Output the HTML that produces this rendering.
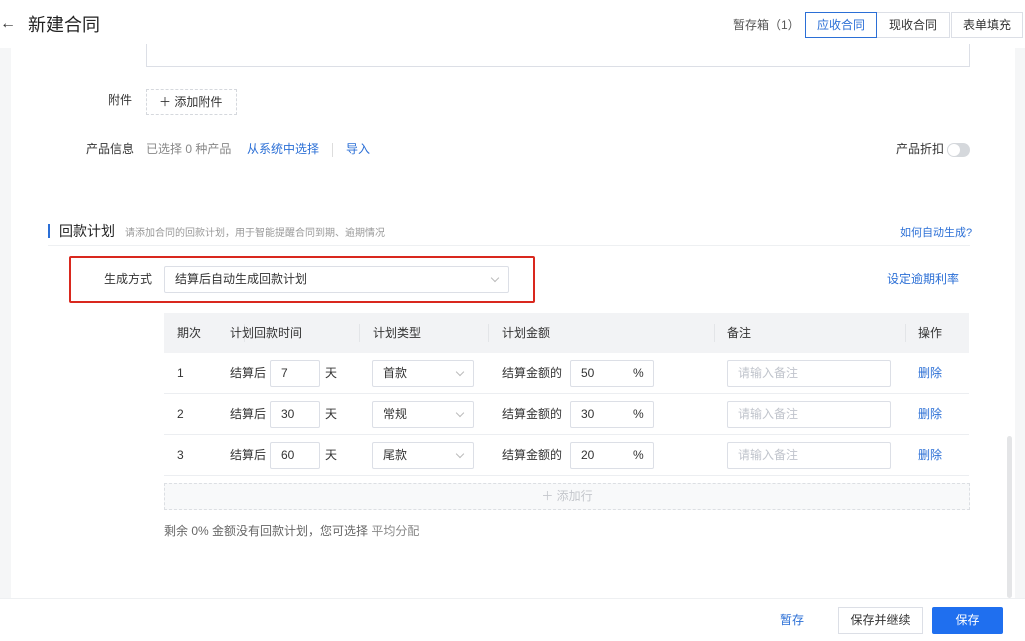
<!DOCTYPE html>
<html><head><meta charset="utf-8"><style>
*{box-sizing:border-box;margin:0;padding:0}
body{width:1025px;height:641px;overflow:hidden;background:#f5f6f7;font-family:"Liberation Sans","Noto Sans CJK SC",sans-serif;font-size:12px;color:#333;position:relative;line-height:16px}
.a{position:absolute;white-space:nowrap}
.blue{color:#2b6fd6}
.inp{position:absolute;height:27px;border:1px solid #dcdfe6;background:#fff;border-radius:2px;line-height:25px;padding-left:10px;font-size:12px}
.sel::after{content:"";position:absolute;right:10px;top:8px;width:5px;height:5px;border-right:1px solid #bbb;border-bottom:1px solid #bbb;transform:rotate(45deg)}
.th{position:absolute;top:313px;height:40px;line-height:40px;font-size:12px;color:#333}
.sep{position:absolute;top:324px;width:1px;height:18px;background:#e3e5e8}
.rl{position:absolute;left:164px;width:805px;height:1px;background:#eceef1}
</style></head><body>
<div class="a" style="left:0;top:0;width:1025px;height:48px;background:#fff"></div>
<div class="a" style="left:11px;top:48px;width:1004px;height:550px;background:#fff"></div>
<div class="a" style="left:0;top:16px;font-size:16px;color:#333">←</div>
<div class="a" style="left:28px;top:14px;font-size:18px;line-height:22px;color:#222">新建合同</div>
<div class="a" style="left:733px;top:17px;color:#555">暂存箱（1）</div>
<div class="a" style="left:805px;top:12px;width:72px;height:26px;border:1px solid #2b6fd6;color:#2b6fd6;text-align:center;line-height:24px">应收合同</div>
<div class="a" style="left:877px;top:12px;width:73px;height:26px;border:1px solid #dcdfe6;border-left:none;text-align:center;line-height:24px">现收合同</div>
<div class="a" style="left:951px;top:12px;width:72px;height:26px;border:1px solid #dcdfe6;text-align:center;line-height:24px">表单填充</div>

<div class="a" style="left:146px;top:44px;width:824px;height:23px;border:1px solid #dcdfe6;border-top:none"></div>
<div class="a" style="left:108px;top:92px;color:#333">附件</div>
<div class="a" style="left:146px;top:89px;width:91px;height:26px;border:1px dashed #d5d8dd;line-height:24px;padding-left:12px">＋ 添加附件</div>
<div class="a" style="left:86px;top:141px">产品信息</div>
<div class="a" style="left:146px;top:141px;color:#888">已选择 0 种产品</div>
<div class="a blue" style="left:247px;top:141px">从系统中选择</div>
<div class="a" style="left:332px;top:143px;width:1px;height:14px;background:#ddd"></div>
<div class="a blue" style="left:346px;top:141px">导入</div>
<div class="a" style="left:896px;top:141px">产品折扣</div>
<div class="a" style="left:947px;top:143px;width:23px;height:14px;border-radius:7px;background:#d5d8dc"></div>
<div class="a" style="left:948px;top:144px;width:12px;height:12px;border-radius:6px;background:#fff"></div>

<div class="a" style="left:48px;top:224px;width:2px;height:14px;background:#2b6fd6"></div>
<div class="a" style="left:59px;top:223px;font-size:14px;color:#222">回款计划</div>
<div class="a" style="left:125px;top:226px;font-size:10px;color:#999">请添加合同的回款计划，用于智能提醒合同到期、逾期情况</div>
<div class="a blue" style="left:900px;top:225px;font-size:11px">如何自动生成?</div>
<div class="a" style="left:48px;top:245px;width:922px;height:1px;background:#eef0f2"></div>

<div class="a" style="left:69px;top:256px;width:466px;height:47px;border:2px solid #d9281e;border-radius:2px"></div>
<div class="a" style="left:104px;top:271px">生成方式</div>
<div class="inp sel" style="left:164px;top:266px;width:345px;">结算后自动生成回款计划</div>
<div class="a blue" style="left:887px;top:271px">设定逾期利率</div>

<div class="a" style="left:164px;top:313px;width:805px;height:40px;background:#f2f3f5"></div>
<div class="th" style="left:177px">期次</div><div class="sep" style="left:244px"></div>
<div class="th" style="left:230px">计划回款时间</div><div class="sep" style="left:359px"></div>
<div class="th" style="left:373px">计划类型</div><div class="sep" style="left:488px"></div>
<div class="th" style="left:502px">计划金额</div><div class="sep" style="left:714px"></div>
<div class="th" style="left:727px">备注</div><div class="sep" style="left:905px"></div>
<div class="th" style="left:918px">操作</div>

<div class="a" style="left:177px;top:365px">1</div><div class="a" style="left:230px;top:365px">结算后</div>
<div class="inp" style="left:270px;top:360px;width:50px">7</div><div class="a" style="left:325px;top:365px">天</div>
<div class="inp sel" style="left:372px;top:360px;width:102px">首款</div>
<div class="a" style="left:502px;top:365px">结算金额的</div>
<div class="inp" style="left:570px;top:360px;width:84px">50<span style="position:absolute;left:62px">%</span></div>
<div class="inp" style="left:727px;top:360px;width:164px;color:#c0c4cc">请输入备注</div>
<div class="a blue" style="left:918px;top:365px">删除</div>
<div class="rl" style="top:393px"></div>

<div class="a" style="left:177px;top:406px">2</div><div class="a" style="left:230px;top:406px">结算后</div>
<div class="inp" style="left:270px;top:401px;width:50px">30</div><div class="a" style="left:325px;top:406px">天</div>
<div class="inp sel" style="left:372px;top:401px;width:102px">常规</div>
<div class="a" style="left:502px;top:406px">结算金额的</div>
<div class="inp" style="left:570px;top:401px;width:84px">30<span style="position:absolute;left:62px">%</span></div>
<div class="inp" style="left:727px;top:401px;width:164px;color:#c0c4cc">请输入备注</div>
<div class="a blue" style="left:918px;top:406px">删除</div>
<div class="rl" style="top:434px"></div>

<div class="a" style="left:177px;top:447px">3</div><div class="a" style="left:230px;top:447px">结算后</div>
<div class="inp" style="left:270px;top:442px;width:50px">60</div><div class="a" style="left:325px;top:447px">天</div>
<div class="inp sel" style="left:372px;top:442px;width:102px">尾款</div>
<div class="a" style="left:502px;top:447px">结算金额的</div>
<div class="inp" style="left:570px;top:442px;width:84px">20<span style="position:absolute;left:62px">%</span></div>
<div class="inp" style="left:727px;top:442px;width:164px;color:#c0c4cc">请输入备注</div>
<div class="a blue" style="left:918px;top:447px">删除</div>
<div class="rl" style="top:475px"></div>

<div class="a" style="left:164px;top:483px;width:806px;height:27px;border:1px dashed #dcdfe3;background:#f8f9fa;text-align:center;line-height:25px;color:#c4c7cc">＋ 添加行</div>
<div class="a" style="left:164px;top:523px;color:#666">剩余 0% 金额没有回款计划，您可选择 <span style="color:#888">平均分配</span></div>

<div class="a" style="left:1007px;top:436px;width:5px;height:162px;background:#e4e5e7;border-radius:3px"></div>

<div class="a" style="left:0;top:598px;width:1025px;height:43px;background:#fff;border-top:1px solid #eef0f2"></div>
<div class="a blue" style="left:780px;top:612px">暂存</div>
<div class="a" style="left:838px;top:607px;width:85px;height:27px;border:1px solid #dcdfe6;text-align:center;line-height:25px">保存并继续</div>
<div class="a" style="left:932px;top:607px;width:71px;height:27px;background:#1f6fef;color:#fff;text-align:center;line-height:27px;border-radius:2px">保存</div>
</body></html>
